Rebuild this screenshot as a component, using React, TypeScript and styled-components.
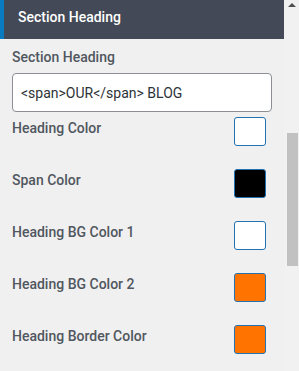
import React from 'react'
import styled, { createGlobalStyle } from 'styled-components'

const GlobalStyle = createGlobalStyle`
    html, body {
        margin: 0;
        padding: 0;
        background: #f0f0f1;
        overflow: hidden;
    }
    * {
        box-sizing: border-box;
    }
`

const colorFields = [
    { label: 'Heading Color', color: '#ffffff' },
    { label: 'Span Color', color: '#000000' },
    { label: 'Heading BG Color 1', color: '#ffffff' },
    { label: 'Heading BG Color 2', color: '#ff7400' },
    { label: 'Heading Border Color', color: '#ff7400' },
]

export default function App() {
    return (
        <Page>
            <GlobalStyle />
            <Panel>
                <PanelHeader>Section Heading</PanelHeader>
                <PanelBody>
                    <FieldLabel>Section Heading</FieldLabel>
                    <TextInput defaultValue="<span>OUR</span> BLOG" />
                    {colorFields.map((f) => (
                        <ColorRow key={f.label}>
                            <ColorLabel>{f.label}</ColorLabel>
                            <Swatch $color={f.color} />
                        </ColorRow>
                    ))}
                </PanelBody>
            </Panel>
            <Scrollbar>
                <ArrowUp />
                <Track>
                    <Thumb />
                </Track>
            </Scrollbar>
        </Page>
    )
}

const Page = styled.div`
    display: flex;
    width: 299px;
    height: 371px;
    overflow: hidden;
    font-family: Roboto, 'Liberation Sans', sans-serif;
`

const Panel = styled.div`
    width: 284px;
    display: flex;
    flex-direction: column;
    > * {
        flex-shrink: 0;
    }
`

const PanelHeader = styled.div`
    height: 39px;
    background: #434956;
    border-left: 4px solid #0a7bc1;
    color: #fff;
    font-size: 14px;
    font-weight: 500;
    line-height: 34px;
    padding-left: 14px;
`

const PanelBody = styled.div`
    padding: 8px 12px 0 12px;
    display: flex;
    flex-direction: column;
    > * {
        flex-shrink: 0;
    }
`

const FieldLabel = styled.div`
    color: #50575e;
    font-size: 14px;
    font-weight: 500;
    line-height: 20px;
`

const TextInput = styled.input`
    margin: 6px 0 5px 0;
    width: 260px;
    height: 39px;
    border: 1px solid #8c8f94;
    border-radius: 4px;
    background: #fff;
    padding: 0 8px;
    font-family: Roboto, 'Liberation Sans', sans-serif;
    font-size: 14px;
    color: #2c3338;
    outline: none;
`

const ColorRow = styled.div`
    display: flex;
    justify-content: space-between;
    align-items: flex-start;
    height: 52px;
    padding-right: 6px;
`

const ColorLabel = styled(FieldLabel)`
    margin-top: 1px;
`

const Swatch = styled.div<{ $color: string }>`
    width: 32px;
    height: 29px;
    border: 1px solid #2271b1;
    border-radius: 3px;
    background: ${(p) => p.$color};
`

const Scrollbar = styled.div`
    width: 15px;
    display: flex;
    flex-direction: column;
    align-items: center;
    background: #f1f1f1;
`

const ArrowUp = styled.div`
    margin-top: 3px;
    width: 0;
    height: 0;
    border-left: 4px solid transparent;
    border-right: 4px solid transparent;
    border-bottom: 4px solid #505050;
`

const Track = styled.div`
    flex: 1;
    width: 100%;
    display: flex;
    justify-content: center;
    padding-top: 126px;
`

const Thumb = styled.div`
    width: 11px;
    height: 133px;
    background: #c1c1c1;
    margin-left: 1px;
`
